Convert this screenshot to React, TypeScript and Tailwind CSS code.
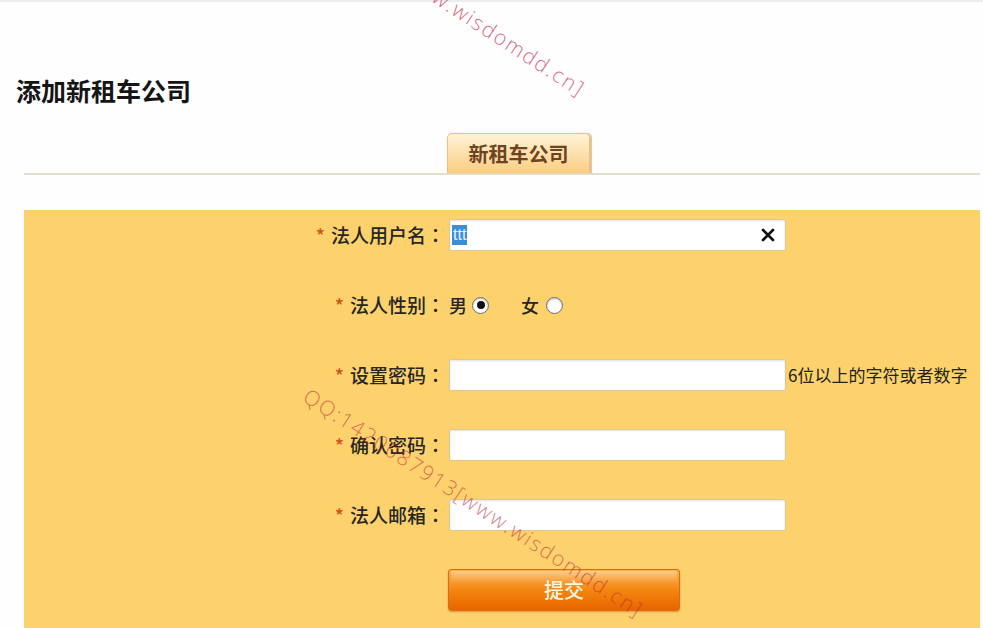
import React from 'react';

const fields = [
  { label: '法人用户名', kind: 'user' },
  { label: '法人性别', kind: 'sex' },
  { label: '设置密码', kind: 'pwd' },
  { label: '确认密码', kind: 'plain' },
  { label: '法人邮箱', kind: 'plain' },
];

function Radio({ checked }: { checked?: boolean }) {
  return (
    <span className="flex h-[17px] w-[17px] items-center justify-center rounded-full border border-[#6f6f6f] bg-white shadow-[inset_0_1px_2px_rgba(0,0,0,0.25)]">
      {checked && <span className="h-[8px] w-[8px] rounded-full bg-[#111]" />}
    </span>
  );
}

function TextBox({ children }: { children?: React.ReactNode }) {
  return (
    <div className="relative flex h-[32px] w-[337px] items-center rounded-[2px] border border-[#dcc894] bg-white shadow-[inset_0_1px_2px_rgba(0,0,0,0.12)]">
      {children}
    </div>
  );
}

export default function App() {
  return (
    <div className="relative h-[628px] w-[983px] overflow-hidden bg-[#fefefe] font-['Noto_Sans_CJK_SC',sans-serif]">
      <div className="h-[2px] bg-[#ededed]" />

      {/* Page title */}
      <h1 className="mt-[71px] pl-[16px] text-[25px] font-bold leading-[34px] text-[#151515]">添加新租车公司</h1>

      {/* Tab strip */}
      <div className="ml-[24px] mt-[26px] w-[956px] border-b-2 border-[#e3dfca]">
        <div className="ml-[423px] flex h-[40px] w-[143px] items-center justify-center rounded-t-[5px] border border-b-0 border-[#efc270] bg-gradient-to-b from-[#fff3d8] to-[#fbcd80] shadow-[2px_0_1px_rgba(190,150,70,0.55)]">
          <span className="text-[20px] font-bold text-[#6e4320]">新租车公司</span>
        </div>
      </div>

      {/* Form panel */}
      <div className="ml-[24px] mt-[35px] flex h-[418px] w-[956px] flex-col gap-[38px] bg-[#fdd26d] pt-[9px]">
        {fields.map((f) => (
          <div key={f.label} className="flex h-[32px] items-center">
            <div className="flex w-[425px] items-center justify-end pr-[4px] text-[19px] font-medium text-[#262626]">
              <span className="mr-[6px] text-[#d4501c]">*</span>
              <span>{f.label}</span>
              <span className="font-['Noto_Sans_CJK_JP',sans-serif]">：</span>
            </div>
            {f.kind === 'sex' ? (
              <div className="flex items-center text-[18px] font-medium text-[#262626]">
                <span>男</span>
                <span className="ml-[5px]"><Radio checked /></span>
                <span className="ml-[32px]">女</span>
                <span className="ml-[7px]"><Radio /></span>
              </div>
            ) : (
              <TextBox>
                {f.kind === 'user' && (
                  <>
                    <span className="ml-[2px] bg-[#3b8ed9] px-[1px] font-['Liberation_Sans',sans-serif] text-[16px] leading-[20px] text-[#e8f2ff]">ttt</span>
                    <svg className="absolute right-[10px] h-[14px] w-[14px]" viewBox="0 0 14 14">
                      <path d="M2 2L12 12M12 2L2 12" stroke="#111" strokeWidth="2.6" strokeLinecap="round" />
                    </svg>
                  </>
                )}
              </TextBox>
            )}
            {f.kind === 'pwd' && (
              <span className="ml-[2px] text-[17px] text-[#222]">6位以上的字符或者数字</span>
            )}
          </div>
        ))}
        <div className="flex pl-[424px]">
          <button className="relative h-[42px] w-[232px] rounded-[3px] border border-[#dc6c12] bg-gradient-to-b from-[#fbb24a] via-[#f5860f] to-[#e86400] text-[20px] font-medium text-[#fff6e0] shadow-[0_1px_2px_rgba(150,70,0,0.4)]">
            <span className="absolute left-[2px] right-[2px] top-[1px] h-[12px] rounded-t-[2px] bg-gradient-to-b from-[rgba(255,255,255,0.35)] to-transparent" />
            <span className="relative">提交</span>
          </button>
        </div>
      </div>

      {/* Video watermark */}
      <span className="pointer-events-none absolute left-[256px] top-[-140px] origin-top-left rotate-[33deg] whitespace-nowrap font-['Open_Sans',sans-serif] text-[21px] font-light tracking-[1.8px] text-[rgba(200,40,70,0.7)]">
        QQ:1420087913[www.wisdomdd.cn]
      </span>
      <span className="pointer-events-none absolute left-[314px] top-[381px] origin-top-left rotate-[33deg] whitespace-nowrap font-['Open_Sans',sans-serif] text-[21px] font-light tracking-[1.8px] text-[rgba(190,40,60,0.6)]">
        QQ:1420087913[www.wisdomdd.cn]
      </span>
    </div>
  );
}
